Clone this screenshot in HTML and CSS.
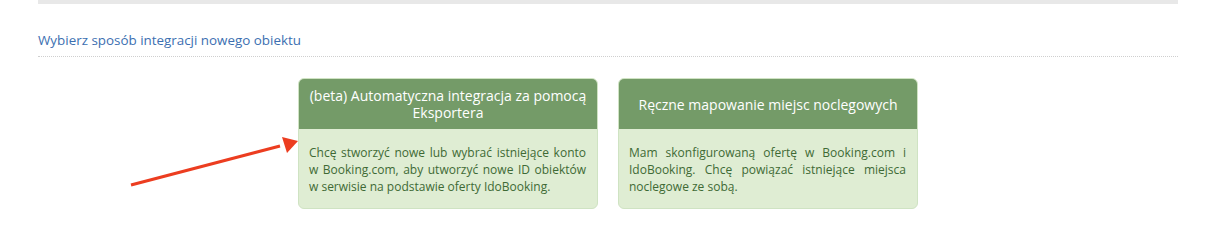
FILE: index.html
```html
<!DOCTYPE html>
<html lang="pl">
<head>
<meta charset="utf-8">
<title>Integracja</title>
<link rel="stylesheet" href="styles.css">
</head>
<body>
<div class="page">
  <div class="topbar"></div>
  <h2 class="heading">Wybierz sposób integracji nowego obiektu</h2>
  <div class="cards">
    <div class="card">
      <div class="card-head">(beta) Automatyczna integracja za pomocą Eksportera</div>
      <div class="card-body">Chcę stworzyć nowe lub wybrać istniejące konto w Booking.com, aby utworzyć nowe ID obiektów w serwisie na podstawie oferty IdoBooking.</div>
    </div>
    <div class="card">
      <div class="card-head">Ręczne mapowanie miejsc noclegowych</div>
      <div class="card-body">Mam skonfigurowaną ofertę w Booking.com i IdoBooking. Chcę powiązać istniejące miejsca noclegowe ze sobą.</div>
    </div>
  </div>
</div>
<svg class="arrow" width="190" height="70" viewBox="0 0 190 70">
  <line x1="11" y1="55" x2="160" y2="16" stroke="#ec3d20" stroke-width="3.2" stroke-linecap="butt"/>
  <polygon points="178,11 162,7 167,23" fill="#ec3d20"/>
</svg>
</body>
</html>
```
FILE: styles.css
```css
html, body {
  margin: 0;
  padding: 0;
  background: #ffffff;
}
body {
  font-family: "Open Sans", "Liberation Sans", sans-serif;
  position: relative;
  width: 1205px;
  height: 230px;
  overflow: hidden;
}
.page {
  margin: 0 27px 0 38px;
}
.topbar {
  height: 4px;
  background: #e8e8e8;
}
.heading {
  margin: 26px 0 0 0;
  padding: 0 0 6px 0;
  font-size: 13.4px;
  line-height: 20px;
  font-weight: normal;
  color: #3c6fb1;
  border-bottom: 1px dotted #cfcfcf;
}
.cards {
  display: flex;
  justify-content: center;
  gap: 20px;
  margin-top: 21px;
}
.card {
  width: 300px;
  box-sizing: border-box;
  border: 1px solid #cfe3c3;
  border-radius: 6px;
  overflow: hidden;
  background: #dfedd3;
  display: flex;
  flex-direction: column;
}
.card-head {
  background: #749b68;
  color: #ffffff;
  font-size: 14px;
  line-height: 17px;
  text-align: center;
  height: 50px;
  box-sizing: border-box;
  padding: 0 8px;
  display: flex;
  align-items: center;
  justify-content: center;
}
.card-body {
  color: #3e6a35;
  font-size: 12px;
  line-height: 17px;
  text-align: justify;
  padding: 15px 11px 13px 10px;
}
.arrow {
  position: absolute;
  left: 120px;
  top: 130px;
}
```
